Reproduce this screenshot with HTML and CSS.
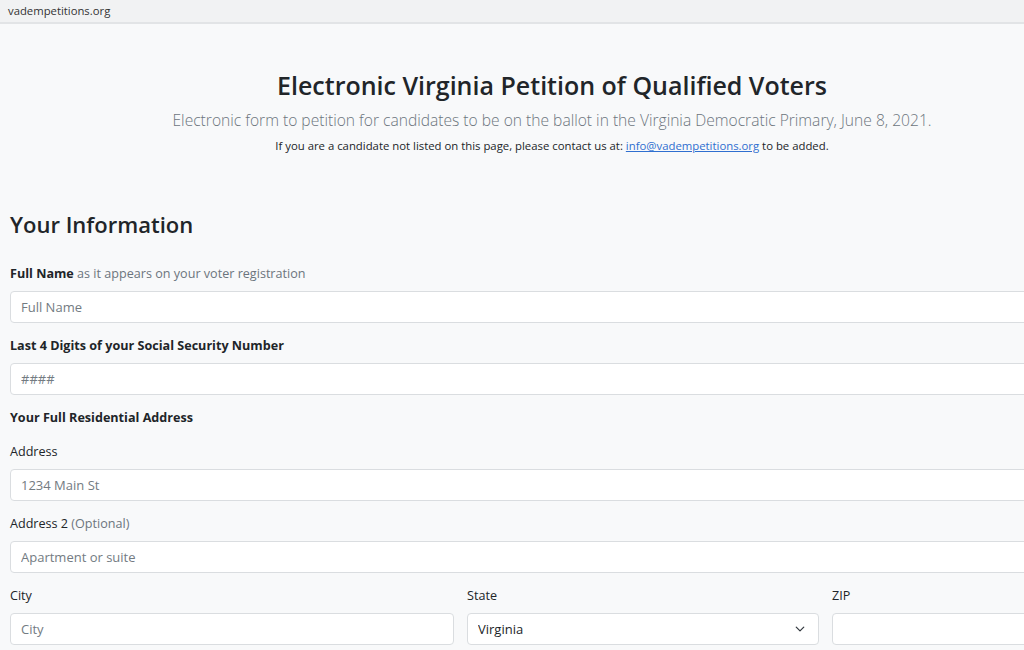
FILE: index.html
```html
<!DOCTYPE html>
<html lang="en">
  <head>
    <meta charset="UTF-8" />
    <meta name="viewport" content="width=device-width, initial-scale=1.0" />
    <title>Electronic Virginia Petition of Qualified Voters</title>
    <link rel="stylesheet" href="styles.css">
  </head>
  <body>
    <div class="urlbar">vadempetitions.org</div>
    <main class="page">
      <header class="intro">
        <h1>Electronic Virginia Petition of Qualified Voters</h1>
        <p class="lead">
          Electronic form to petition for candidates to be on the ballot in the Virginia Democratic Primary, June 8, 2021.
        </p>
        <p class="note">
          If you are a candidate not listed on this page, please contact us at:
          <a href="mailto:info@vadempetitions.org">info@vadempetitions.org</a> to be added.
        </p>
      </header>

      <form class="form">
        <h2>Your Information</h2>

        <div class="field">
          <label for="fullname"><b>Full Name</b> <span class="muted">as it appears on your voter registration</span></label>
          <input id="fullname" type="text" placeholder="Full Name" />
        </div>

        <div class="field">
          <label for="ssn"><b>Last 4 Digits of your Social Security Number</b></label>
          <input id="ssn" type="text" placeholder="####" />
        </div>

        <h3>Your Full Residential Address</h3>

        <div class="field">
          <label for="address">Address</label>
          <input id="address" type="text" placeholder="1234 Main St" />
        </div>

        <div class="field">
          <label for="address2">Address 2 <span class="muted">(Optional)</span></label>
          <input id="address2" type="text" placeholder="Apartment or suite" />
        </div>

        <div class="row">
          <div class="field col-5">
            <label for="city">City</label>
            <input id="city" type="text" placeholder="City" />
          </div>
          <div class="field col-4">
            <label for="state">State</label>
            <div class="select">
              <select id="state">
                <option>Virginia</option>
              </select>
              <svg class="chevron" width="10" height="10" viewBox="0 0 16 16">
                <path d="M2 5l6 6 6-6" fill="none" stroke="#343a40" stroke-width="2" stroke-linecap="round" stroke-linejoin="round" />
              </svg>
            </div>
          </div>
          <div class="field col-3">
            <label for="zip">ZIP</label>
            <input id="zip" type="text" />
          </div>
        </div>
      </form>
    </main>
  </body>
</html>
```

FILE: styles.css
```css
html,
body {
  margin: 0;
  overflow: hidden;
}
body {
  background-color: #f8f9fa;
  color: #212529;
  font-family: "Open Sans", "Noto Sans", sans-serif;
  font-size: 12.6px;
}
.urlbar {
  height: 22px;
  line-height: 22px;
  padding-left: 8px;
  font-size: 11.3px;
  color: #333;
  background-color: #f1f2f3;
  border-bottom: 2px solid #e2e4e6;
}
.page {
  width: 1084px;
  padding: 0 10px;
}
.intro {
  text-align: center;
  padding-top: 43px;
}
h1 {
  margin: 0;
  font-size: 25px;
  font-weight: 600;
  line-height: 36px;
}
.lead {
  margin: 4px 0 0;
  font-size: 15.6px;
  font-weight: 300;
  color: #6c757d;
  line-height: 26px;
}
.note {
  margin: 3px 0 0;
  font-size: 11.35px;
  line-height: 20px;
}
a {
  color: #2f6fd0;
}
.form {
  padding-top: 52px;
}
h2 {
  margin: 0 0 25px;
  font-size: 22px;
  font-weight: 600;
  line-height: 32px;
}
h3 {
  margin: 0 0 16px;
  font-size: 12.6px;
  font-weight: 700;
  line-height: 18px;
}
.field {
  margin-bottom: 14px;
}
.field label {
  display: block;
  line-height: 18px;
  margin-bottom: 8px;
}
.muted {
  color: #6c757d;
}
input,
select {
  display: block;
  box-sizing: border-box;
  width: 100%;
  height: 32px;
  padding: 0 10px;
  font-family: inherit;
  font-size: 13px;
  color: #212529;
  background-color: #fff;
  border: 1px solid #dadde0;
  border-radius: 4px;
  appearance: none;
}
input::placeholder {
  color: #737b82;
}
.row {
  display: flex;
  gap: 13px;
}
.col-5 {
  width: 444px;
}
.col-4 {
  width: 352px;
}
.col-3 {
  flex: 1;
}
.select {
  position: relative;
}
.chevron {
  position: absolute;
  right: 14px;
  top: 11px;
}
```
